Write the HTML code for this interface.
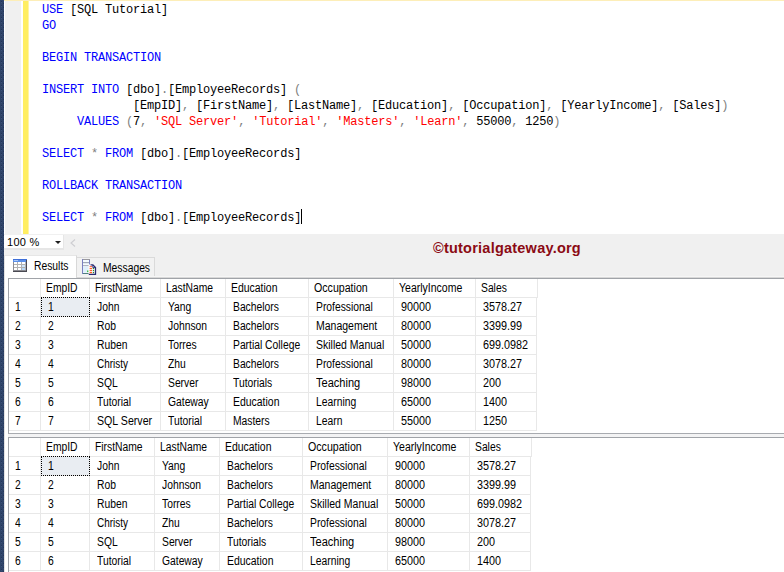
<!DOCTYPE html>
<html><head><meta charset="utf-8"><title>SQL Rollback Transaction</title>
<style>
html,body{margin:0;padding:0;}
body{width:784px;height:572px;overflow:hidden;background:#fff;position:relative;font-family:"Liberation Sans",sans-serif;}
#strip{position:absolute;left:0;top:0;width:4px;height:572px;}
#topline{position:absolute;left:4px;top:0;width:780px;height:1px;background:#fdeeb8;}
#margin{position:absolute;left:5px;top:1px;width:16px;height:233px;background:#f0f0f0;}
#yellow{position:absolute;left:23px;top:1px;width:5px;height:233px;background:#ffee62;border-right:1px solid #fff4a4;}
#code{position:absolute;left:42px;top:2px;font-family:"Liberation Mono",monospace;font-size:12px;letter-spacing:-0.2px;line-height:16px;color:#000;white-space:pre;}
#code .ln{height:16px;}
#code b{font-weight:normal;color:#0000ff;}
#code i{font-style:normal;color:#808080;}
#code s{text-decoration:none;color:#ff0000;}
#code u{display:inline-block;width:1px;height:15px;background:#000;vertical-align:top;text-decoration:none;margin-top:-1px;}
#bar{position:absolute;left:4px;top:234px;width:780px;height:44px;background:#f0f0f0;}
#zoom{position:absolute;left:4px;top:235px;width:59px;height:13px;background:#fff;border-bottom:2px solid #e6e6e6;border-right:1px solid #e6e6e6;}
#zoom span{position:absolute;left:3px;top:0;font-size:11px;line-height:14px;color:#000;letter-spacing:0.3px;}
#zoom em{position:absolute;left:51px;top:6px;width:0;height:0;border-left:3px solid transparent;border-right:3px solid transparent;border-top:3px solid #1e1e1e;}
#chev{position:absolute;left:70px;top:239px;width:6px;height:8px;}
#tab1{position:absolute;left:4px;top:255px;width:73px;height:23px;background:#fff;border-right:1px solid #d8d8d8;border-top:1px solid #e6e6e6;border-left:1px solid #e2e2e2;box-sizing:border-box;}
#tab2{position:absolute;left:77px;top:257px;width:78px;height:19px;background:#f2f2f2;border:1px solid #dadada;border-left:none;border-bottom:none;box-sizing:border-box;}
#pagebg{position:absolute;left:4px;top:276px;width:780px;height:296px;background:#fff;border-left:1px solid #e2e2e2;box-sizing:border-box;}
#l1{position:absolute;left:77px;top:276px;width:707px;height:1px;background:#f6f6f6;}
#l2{position:absolute;left:77px;top:277px;width:707px;height:1px;background:#d8d8d8;}
.tl{position:absolute;font-size:12px;line-height:14px;color:#000;transform:scaleX(0.86);transform-origin:0 0;white-space:nowrap;}
#ico1{position:absolute;left:13px;top:259px;}
#ico2{position:absolute;left:82px;top:259px;}
#wm{position:absolute;left:433px;top:240px;font-size:14.5px;line-height:16px;font-weight:bold;color:#8b0a14;letter-spacing:0.23px;white-space:nowrap;}
.grid{position:absolute;left:8px;width:776px;background:#fff;border-top:1px solid #a0a3a8;border-left:1px solid #a0a3a8;border-bottom:1px solid #a8abb0;box-sizing:border-box;overflow:hidden;}
.c{position:absolute;height:19px;line-height:18px;font-size:12px;color:#000;border-right:1px solid #e8e8e8;border-bottom:1px solid #e8e8e8;white-space:nowrap;overflow:hidden;}
.c span{display:inline-block;transform:scaleX(0.86);transform-origin:0 50%;}
.c.n span{transform:scaleX(0.9);}
.c.h{padding-left:5px;}
.c.d{padding-left:7px;}
.c.rh{padding-left:6px;}
.c.h,.c.d,.c.rh{box-sizing:border-box;}
.sel{position:absolute;box-sizing:border-box;border:1px dotted #000;}
.c.s1{background:#e9edf2;}
.split{position:absolute;left:8px;width:776px;height:3px;background:#f3f3f4;}
</style></head><body>
<svg id="strip" width="4" height="572" shape-rendering="crispEdges"><defs><pattern id="dots" width="4" height="4" patternUnits="userSpaceOnUse"><rect width="4" height="4" fill="#2f4468"/><rect x="1" y="1" width="1" height="1" fill="#25355a"/><rect x="1" y="2" width="1" height="1" fill="#3b5079"/><rect x="3" y="3" width="1" height="1" fill="#25355a"/><rect x="3" y="0" width="1" height="1" fill="#36496f"/></pattern></defs><rect width="4" height="572" fill="url(#dots)"/></svg>
<div id="topline"></div>
<div id="margin"></div>
<div id="yellow"></div>
<div id="code"><div class="ln"><b>USE</b> [SQL Tutorial]</div><div class="ln"><b>GO</b></div><div class="ln"></div><div class="ln"><b>BEGIN TRANSACTION</b></div><div class="ln"></div><div class="ln"><b>INSERT INTO</b> [dbo]<i>.</i>[EmployeeRecords] <i>(</i></div><div class="ln">             [EmpID]<i>,</i> [FirstName]<i>,</i> [LastName]<i>,</i> [Education]<i>,</i> [Occupation]<i>,</i> [YearlyIncome]<i>,</i> [Sales]<i>)</i></div><div class="ln">     <b>VALUES</b> <i>(</i>7<i>,</i> <s>'SQL Server'</s><i>,</i> <s>'Tutorial'</s><i>,</i> <s>'Masters'</s><i>,</i> <s>'Learn'</s><i>,</i> 55000<i>,</i> 1250<i>)</i></div><div class="ln"></div><div class="ln"><b>SELECT</b> <i>*</i> <b>FROM</b> [dbo]<i>.</i>[EmployeeRecords]</div><div class="ln"></div><div class="ln"><b>ROLLBACK TRANSACTION</b></div><div class="ln"></div><div class="ln"><b>SELECT</b> <i>*</i> <b>FROM</b> [dbo]<i>.</i>[EmployeeRecords]<u></u></div></div>
<div id="bar"></div>
<div id="zoom"><span>100 %</span><em></em></div>
<svg id="chev" viewBox="0 0 6 8"><path d="M5 0.5 L1 4 L5 7.5" fill="none" stroke="#cdcdd1" stroke-width="1.1"/></svg>
<div id="pagebg"></div>
<div id="l1"></div><div id="l2"></div>
<div id="tab1"></div>
<div id="tab2"></div>
<svg id="ico1" width="14" height="13" viewBox="0 0 14 13" shape-rendering="crispEdges">
<rect x="0" y="0" width="14" height="13" fill="#fff"/>
<rect x="0" y="0" width="14" height="3" fill="#5b8fe8"/>
<rect x="0" y="0" width="14" height="1" fill="#3f6fd8"/>
<rect x="1" y="1" width="4" height="1" fill="#a9c6f6"/>
<rect x="0" y="3" width="1" height="10" fill="#8c8c94"/>
<rect x="4" y="3" width="1" height="9" fill="#b2b2b2"/>
<rect x="8" y="3" width="1" height="9" fill="#b2b2b2"/>
<rect x="12" y="3" width="1" height="9" fill="#b2b2b2"/>
<rect x="1" y="5" width="12" height="1" fill="#b2b2b2"/>
<rect x="1" y="8" width="12" height="1" fill="#b2b2b2"/>
<rect x="9" y="6" width="3" height="2" fill="#cfe6fb"/>
<rect x="9" y="9" width="3" height="2" fill="#b8d8f8"/>
<rect x="13" y="1" width="1" height="12" fill="#4a4a55"/>
<rect x="0" y="11" width="14" height="2" fill="#4a4a52"/>
<rect x="0" y="11" width="13" height="1" fill="#8a8a90"/>
</svg>
<svg id="ico2" width="15" height="16" viewBox="0 0 15 16">
<rect x="0.5" y="0.5" width="7" height="14" fill="#f4fbff" stroke="#7a7fc0" stroke-width="1"/>
<rect x="1" y="0" width="7" height="1" fill="#9a9aa0"/>
<rect x="1" y="3" width="6" height="1.2" fill="#a0a8b8"/>
<rect x="1" y="6" width="6" height="1.2" fill="#b0b4c0"/>
<rect x="1" y="7.5" width="6" height="6" fill="#dff0fb"/>
<rect x="5" y="11.5" width="1.6" height="1.6" fill="#44c044"/>
<rect x="1" y="14" width="7" height="1" fill="#4f7f7f"/>
<path d="M6.6 5.6 H11 L13.6 8.2 V15.4 H6.6 Z" fill="#fff"/>
<path d="M8.5 5.9 H10.9 L13.5 8.5 V15.3 H6.8" fill="none" stroke="#2a2a70" stroke-width="1.3"/>
<path d="M10.8 6 V8.6 H13.3" fill="none" stroke="#2a2a70" stroke-width="0.9"/>
<rect x="7.6" y="7" width="2.4" height="1.2" fill="#ff6a4a"/>
<rect x="7.6" y="9" width="2.4" height="1.2" fill="#ff5a20"/>
<rect x="7.6" y="11" width="2.4" height="1.2" fill="#ff5a30"/>
<rect x="7.6" y="13" width="2.4" height="1.2" fill="#ff5a20"/>
<rect x="10.8" y="9" width="1.3" height="1.2" fill="#2e8b2e"/>
<rect x="10.8" y="11" width="1.3" height="1.2" fill="#2e8b2e"/>
<rect x="10.8" y="13" width="1.3" height="1.2" fill="#2e7b2e"/>
</svg>
<div class="tl" style="left:34px;top:259px">Results</div>
<div class="tl" style="left:103px;top:261px">Messages</div>
<div id="wm">©tutorialgateway.org</div>
<div class="grid" style="top:278px;height:156px">
<div class="c rh" style="left:0;top:0px;width:32px"><span></span></div>
<div class="c h" style="left:32px;top:0px;width:49px"><span>EmpID</span></div>
<div class="c h" style="left:81px;top:0px;width:71px"><span>FirstName</span></div>
<div class="c h" style="left:152px;top:0px;width:65px"><span>LastName</span></div>
<div class="c h" style="left:217px;top:0px;width:83px"><span style="transform:scaleX(0.87)">Education</span></div>
<div class="c h" style="left:300px;top:0px;width:85px"><span style="transform:scaleX(0.885)">Occupation</span></div>
<div class="c h" style="left:385px;top:0px;width:82px"><span style="transform:scaleX(0.875)">YearlyIncome</span></div>
<div class="c h" style="left:467px;top:0px;width:62px"><span>Sales</span></div>
<div class="c rh" style="left:0;top:19px;width:32px"><span>1</span></div>
<div class="c d s1" style="left:32px;top:19px;width:49px"><span>1</span></div>
<div class="c d" style="left:81px;top:19px;width:71px"><span>John</span></div>
<div class="c d" style="left:152px;top:19px;width:65px"><span>Yang</span></div>
<div class="c d" style="left:217px;top:19px;width:83px"><span>Bachelors</span></div>
<div class="c d" style="left:300px;top:19px;width:85px"><span>Professional</span></div>
<div class="c d n" style="left:385px;top:19px;width:82px"><span>90000</span></div>
<div class="c d n" style="left:467px;top:19px;width:61px"><span>3578.27</span></div>
<div class="c rh" style="left:0;top:38px;width:32px"><span>2</span></div>
<div class="c d" style="left:32px;top:38px;width:49px"><span>2</span></div>
<div class="c d" style="left:81px;top:38px;width:71px"><span>Rob</span></div>
<div class="c d" style="left:152px;top:38px;width:65px"><span>Johnson</span></div>
<div class="c d" style="left:217px;top:38px;width:83px"><span>Bachelors</span></div>
<div class="c d" style="left:300px;top:38px;width:85px"><span style="transform:scaleX(0.875)">Management</span></div>
<div class="c d n" style="left:385px;top:38px;width:82px"><span>80000</span></div>
<div class="c d n" style="left:467px;top:38px;width:61px"><span>3399.99</span></div>
<div class="c rh" style="left:0;top:57px;width:32px"><span>3</span></div>
<div class="c d" style="left:32px;top:57px;width:49px"><span>3</span></div>
<div class="c d" style="left:81px;top:57px;width:71px"><span>Ruben</span></div>
<div class="c d" style="left:152px;top:57px;width:65px"><span>Torres</span></div>
<div class="c d" style="left:217px;top:57px;width:83px"><span>Partial College</span></div>
<div class="c d" style="left:300px;top:57px;width:85px"><span style="transform:scaleX(0.875)">Skilled Manual</span></div>
<div class="c d n" style="left:385px;top:57px;width:82px"><span>50000</span></div>
<div class="c d n" style="left:467px;top:57px;width:61px"><span>699.0982</span></div>
<div class="c rh" style="left:0;top:76px;width:32px"><span>4</span></div>
<div class="c d" style="left:32px;top:76px;width:49px"><span>4</span></div>
<div class="c d" style="left:81px;top:76px;width:71px"><span style="transform:scaleX(0.83)">Christy</span></div>
<div class="c d" style="left:152px;top:76px;width:65px"><span>Zhu</span></div>
<div class="c d" style="left:217px;top:76px;width:83px"><span>Bachelors</span></div>
<div class="c d" style="left:300px;top:76px;width:85px"><span>Professional</span></div>
<div class="c d n" style="left:385px;top:76px;width:82px"><span>80000</span></div>
<div class="c d n" style="left:467px;top:76px;width:61px"><span>3078.27</span></div>
<div class="c rh" style="left:0;top:95px;width:32px"><span>5</span></div>
<div class="c d" style="left:32px;top:95px;width:49px"><span>5</span></div>
<div class="c d" style="left:81px;top:95px;width:71px"><span>SQL</span></div>
<div class="c d" style="left:152px;top:95px;width:65px"><span>Server</span></div>
<div class="c d" style="left:217px;top:95px;width:83px"><span>Tutorials</span></div>
<div class="c d" style="left:300px;top:95px;width:85px"><span style="transform:scaleX(0.92)">Teaching</span></div>
<div class="c d n" style="left:385px;top:95px;width:82px"><span>98000</span></div>
<div class="c d n" style="left:467px;top:95px;width:61px"><span>200</span></div>
<div class="c rh" style="left:0;top:114px;width:32px"><span>6</span></div>
<div class="c d" style="left:32px;top:114px;width:49px"><span>6</span></div>
<div class="c d" style="left:81px;top:114px;width:71px"><span>Tutorial</span></div>
<div class="c d" style="left:152px;top:114px;width:65px"><span>Gateway</span></div>
<div class="c d" style="left:217px;top:114px;width:83px"><span style="transform:scaleX(0.87)">Education</span></div>
<div class="c d" style="left:300px;top:114px;width:85px"><span>Learning</span></div>
<div class="c d n" style="left:385px;top:114px;width:82px"><span>65000</span></div>
<div class="c d n" style="left:467px;top:114px;width:61px"><span>1400</span></div>
<div class="c rh" style="left:0;top:133px;width:32px"><span>7</span></div>
<div class="c d" style="left:32px;top:133px;width:49px"><span>7</span></div>
<div class="c d" style="left:81px;top:133px;width:71px"><span style="transform:scaleX(0.885)">SQL Server</span></div>
<div class="c d" style="left:152px;top:133px;width:65px"><span>Tutorial</span></div>
<div class="c d" style="left:217px;top:133px;width:83px"><span>Masters</span></div>
<div class="c d" style="left:300px;top:133px;width:85px"><span>Learn</span></div>
<div class="c d n" style="left:385px;top:133px;width:82px"><span>55000</span></div>
<div class="c d n" style="left:467px;top:133px;width:61px"><span>1250</span></div>
<div class="sel" style="left:32px;top:18px;width:49px;height:20px"></div>
</div>
<div class="split" style="top:434px"></div>
<div class="grid" style="top:437px;height:140px">
<div class="c rh" style="left:0;top:0px;width:32px"><span></span></div>
<div class="c h" style="left:32px;top:0px;width:49px"><span>EmpID</span></div>
<div class="c h" style="left:81px;top:0px;width:65px"><span>FirstName</span></div>
<div class="c h" style="left:146px;top:0px;width:65px"><span>LastName</span></div>
<div class="c h" style="left:211px;top:0px;width:83px"><span style="transform:scaleX(0.87)">Education</span></div>
<div class="c h" style="left:294px;top:0px;width:85px"><span style="transform:scaleX(0.885)">Occupation</span></div>
<div class="c h" style="left:379px;top:0px;width:82px"><span style="transform:scaleX(0.875)">YearlyIncome</span></div>
<div class="c h" style="left:461px;top:0px;width:62px"><span>Sales</span></div>
<div class="c rh" style="left:0;top:19px;width:32px"><span>1</span></div>
<div class="c d s1" style="left:32px;top:19px;width:49px"><span>1</span></div>
<div class="c d" style="left:81px;top:19px;width:65px"><span>John</span></div>
<div class="c d" style="left:146px;top:19px;width:65px"><span>Yang</span></div>
<div class="c d" style="left:211px;top:19px;width:83px"><span>Bachelors</span></div>
<div class="c d" style="left:294px;top:19px;width:85px"><span>Professional</span></div>
<div class="c d n" style="left:379px;top:19px;width:82px"><span>90000</span></div>
<div class="c d n" style="left:461px;top:19px;width:61px"><span>3578.27</span></div>
<div class="c rh" style="left:0;top:38px;width:32px"><span>2</span></div>
<div class="c d" style="left:32px;top:38px;width:49px"><span>2</span></div>
<div class="c d" style="left:81px;top:38px;width:65px"><span>Rob</span></div>
<div class="c d" style="left:146px;top:38px;width:65px"><span>Johnson</span></div>
<div class="c d" style="left:211px;top:38px;width:83px"><span>Bachelors</span></div>
<div class="c d" style="left:294px;top:38px;width:85px"><span style="transform:scaleX(0.875)">Management</span></div>
<div class="c d n" style="left:379px;top:38px;width:82px"><span>80000</span></div>
<div class="c d n" style="left:461px;top:38px;width:61px"><span>3399.99</span></div>
<div class="c rh" style="left:0;top:57px;width:32px"><span>3</span></div>
<div class="c d" style="left:32px;top:57px;width:49px"><span>3</span></div>
<div class="c d" style="left:81px;top:57px;width:65px"><span>Ruben</span></div>
<div class="c d" style="left:146px;top:57px;width:65px"><span>Torres</span></div>
<div class="c d" style="left:211px;top:57px;width:83px"><span>Partial College</span></div>
<div class="c d" style="left:294px;top:57px;width:85px"><span style="transform:scaleX(0.875)">Skilled Manual</span></div>
<div class="c d n" style="left:379px;top:57px;width:82px"><span>50000</span></div>
<div class="c d n" style="left:461px;top:57px;width:61px"><span>699.0982</span></div>
<div class="c rh" style="left:0;top:76px;width:32px"><span>4</span></div>
<div class="c d" style="left:32px;top:76px;width:49px"><span>4</span></div>
<div class="c d" style="left:81px;top:76px;width:65px"><span style="transform:scaleX(0.83)">Christy</span></div>
<div class="c d" style="left:146px;top:76px;width:65px"><span>Zhu</span></div>
<div class="c d" style="left:211px;top:76px;width:83px"><span>Bachelors</span></div>
<div class="c d" style="left:294px;top:76px;width:85px"><span>Professional</span></div>
<div class="c d n" style="left:379px;top:76px;width:82px"><span>80000</span></div>
<div class="c d n" style="left:461px;top:76px;width:61px"><span>3078.27</span></div>
<div class="c rh" style="left:0;top:95px;width:32px"><span>5</span></div>
<div class="c d" style="left:32px;top:95px;width:49px"><span>5</span></div>
<div class="c d" style="left:81px;top:95px;width:65px"><span>SQL</span></div>
<div class="c d" style="left:146px;top:95px;width:65px"><span>Server</span></div>
<div class="c d" style="left:211px;top:95px;width:83px"><span>Tutorials</span></div>
<div class="c d" style="left:294px;top:95px;width:85px"><span style="transform:scaleX(0.92)">Teaching</span></div>
<div class="c d n" style="left:379px;top:95px;width:82px"><span>98000</span></div>
<div class="c d n" style="left:461px;top:95px;width:61px"><span>200</span></div>
<div class="c rh" style="left:0;top:114px;width:32px"><span>6</span></div>
<div class="c d" style="left:32px;top:114px;width:49px"><span>6</span></div>
<div class="c d" style="left:81px;top:114px;width:65px"><span>Tutorial</span></div>
<div class="c d" style="left:146px;top:114px;width:65px"><span>Gateway</span></div>
<div class="c d" style="left:211px;top:114px;width:83px"><span style="transform:scaleX(0.87)">Education</span></div>
<div class="c d" style="left:294px;top:114px;width:85px"><span>Learning</span></div>
<div class="c d n" style="left:379px;top:114px;width:82px"><span>65000</span></div>
<div class="c d n" style="left:461px;top:114px;width:61px"><span>1400</span></div>
<div class="sel" style="left:32px;top:18px;width:49px;height:20px"></div>
</div>
</body></html>
